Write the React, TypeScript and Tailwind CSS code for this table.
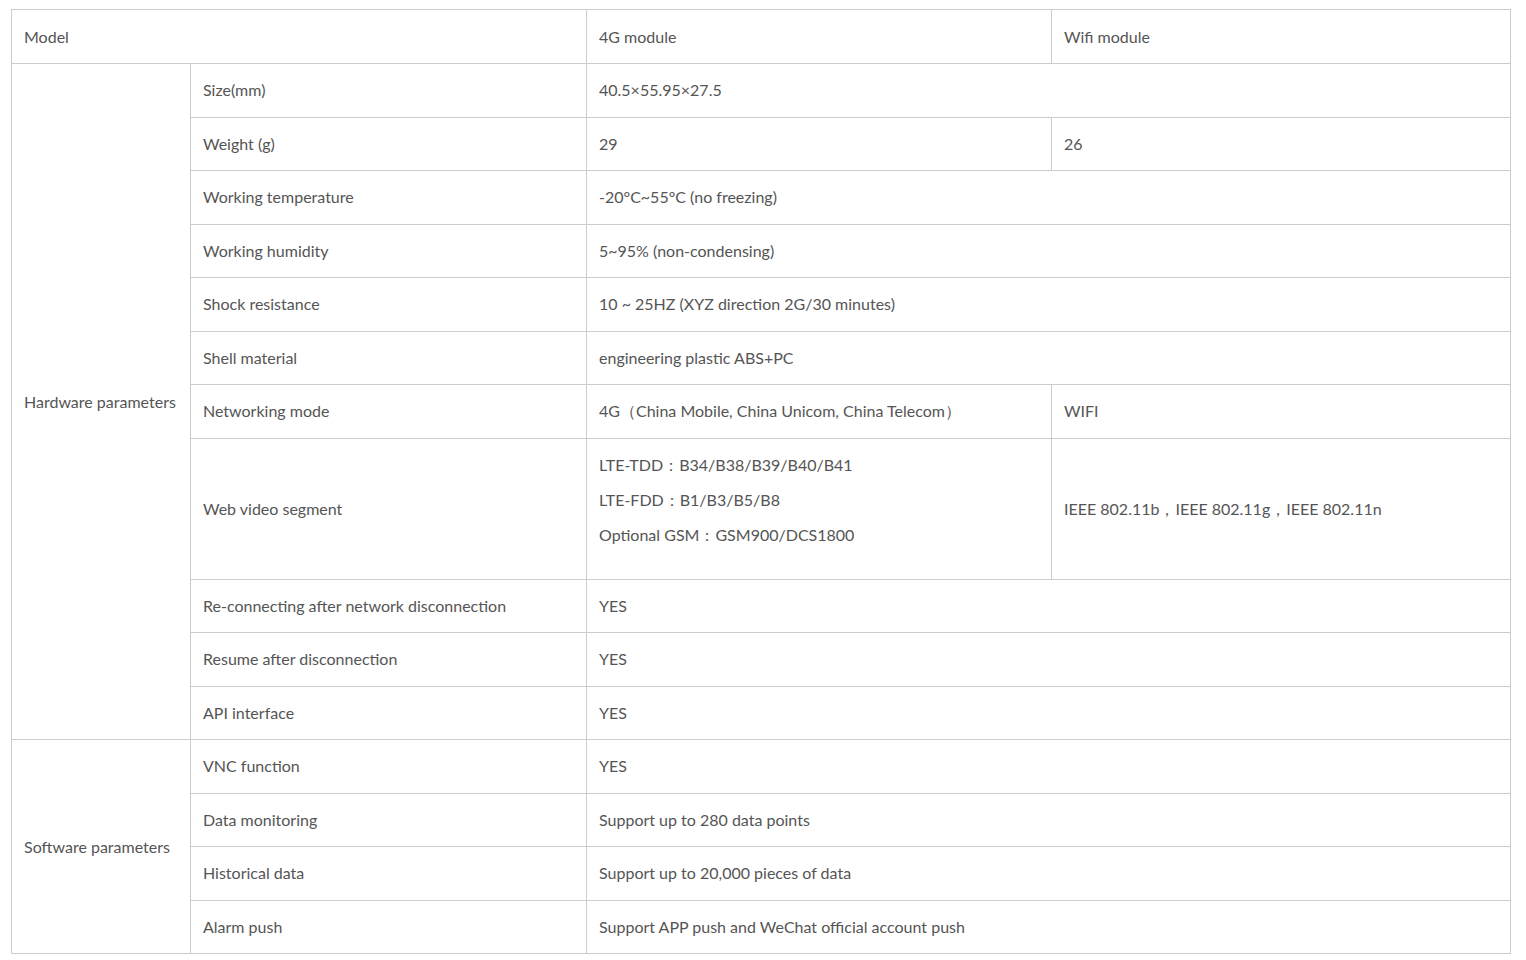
const rows: { label: string; a: string; b?: string }[] = [
  { label: "Size(mm)", a: "40.5×55.95×27.5" },
  { label: "Weight (g)", a: "29", b: "26" },
  { label: "Working temperature", a: "-20°C~55°C (no freezing)" },
  { label: "Working humidity", a: "5~95% (non-condensing)" },
  { label: "Shock resistance", a: "10 ~ 25HZ (XYZ direction 2G/30 minutes)" },
  { label: "Shell material", a: "engineering plastic ABS+PC" },
  { label: "Networking mode", a: "4G（China Mobile, China Unicom, China Telecom）", b: "WIFI" },
];

const rowsAfter = [
  { label: "Re-connecting after network disconnection", a: "YES" },
  { label: "Resume after disconnection", a: "YES" },
  { label: "API interface", a: "YES" },
];

const software = [
  { label: "VNC function", a: "YES" },
  { label: "Data monitoring", a: "Support up to 280 data points" },
  { label: "Historical data", a: "Support up to 20,000 pieces of data" },
  { label: "Alarm push", a: "Support APP push and WeChat official account push" },
];

const cell = "border border-[#cccccc] px-[12px] align-middle";

export default function App() {
  return (
    <div className="min-h-screen bg-white pt-[9px] pl-[11px]">
      <table
        className="border-collapse table-fixed text-[16px] text-[#555555] w-[1499px]"
        style={{ fontFamily: "Lato, 'Noto Sans', sans-serif" }}
      >
        <colgroup>
          <col className="w-[179px]" />
          <col className="w-[396px]" />
          <col className="w-[465px]" />
          <col className="w-[459px]" />
        </colgroup>
        <tbody>
          <tr className="h-[54px]">
            <td colSpan={2} className={cell}>Model</td>
            <td className={cell}>4G module</td>
            <td className={cell}>Wifi module</td>
          </tr>
          {rows.map((r, i) => (
            <tr key={r.label} className="h-[53.5px]">
              {i === 0 && (
                <td rowSpan={rows.length + 1 + rowsAfter.length} className={cell}>
                  Hardware parameters
                </td>
              )}
              <td className={cell}>{r.label}</td>
              {r.b ? (
                <>
                  <td className={cell}>{r.a}</td>
                  <td className={cell}>{r.b}</td>
                </>
              ) : (
                <td colSpan={2} className={cell}>{r.a}</td>
              )}
            </tr>
          ))}
          <tr className="h-[141px]">
            <td className={cell}>Web video segment</td>
            <td className="border border-[#cccccc] px-[12px] align-top pt-[8px]">
              <div className="leading-[35px]">LTE-TDD：B34/B38/B39/B40/B41</div>
              <div className="leading-[35px]">LTE-FDD：B1/B3/B5/B8</div>
              <div className="leading-[35px]">Optional GSM：GSM900/DCS1800</div>
            </td>
            <td className={cell}>IEEE 802.11b，IEEE 802.11g，IEEE 802.11n</td>
          </tr>
          {rowsAfter.map((r) => (
            <tr key={r.label} className="h-[53.5px]">
              <td className={cell}>{r.label}</td>
              <td colSpan={2} className={cell}>{r.a}</td>
            </tr>
          ))}
          {software.map((r, i) => (
            <tr key={r.label} className="h-[53.5px]">
              {i === 0 && (
                <td rowSpan={software.length} className={cell}>
                  Software parameters
                </td>
              )}
              <td className={cell}>{r.label}</td>
              <td colSpan={2} className={cell}>{r.a}</td>
            </tr>
          ))}
        </tbody>
      </table>
    </div>
  );
}
